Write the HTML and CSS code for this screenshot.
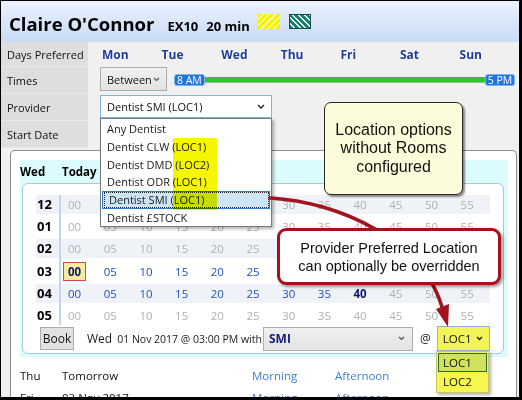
FILE: index.html
```html
<!DOCTYPE html>
<html>
<head>
<meta charset="utf-8">
<link rel="stylesheet" href="styles.css">
</head>
<body>
<div class="frame">
  <header class="hdr">
    <span class="name">Claire O'Connor</span>
    <span class="code">EX10</span>
    <span class="dur">20 min</span>
    <span class="sw sw-yellow"></span>
    <span class="sw sw-teal"></span>
  </header>

  <div class="form">
    <div class="lbl">Days Preferred</div>
    <div class="fld days"><span>Mon</span><span>Tue</span><span>Wed</span><span>Thu</span><span>Fri</span><span>Sat</span><span>Sun</span></div>
    <div class="lbl">Times</div>
    <div class="fld times">
      <div class="sel sel-between">Between<svg class="chev" width="7" height="5" viewBox="0 0 7 5"><path d="M1 1L3.5 3.5L6 1" fill="none" stroke="#555" stroke-width="1.2"/></svg></div>
      <div class="slider"><span class="pill">8 AM</span><span class="bar"></span><span class="pill">5 PM</span></div>
    </div>
    <div class="lbl">Provider</div>
    <div class="fld"><div class="sel sel-provider">Dentist SMI (LOC1)<svg class="chev" width="8" height="5" viewBox="0 0 8 5"><path d="M1 1L4 4L7 1" fill="none" stroke="#222" stroke-width="1.4"/></svg></div></div>
    <div class="lbl">Start Date</div>
    <div class="fld"></div>
  </div>

  <div class="main">
    <div class="panel">
      <div class="day">
        <div class="dayhead"><span class="dname">Wed</span><span>Today</span></div>
        <div class="slots">
          <div class="grid">
            <div class="hcol">
              <div class="h s">12</div>
              <div class="h">01</div>
              <div class="h s">02</div>
              <div class="h">03</div>
              <div class="h s">04</div>
              <div class="h">05</div>
            </div>
            <div class="mcol">
              <div class="mrow s"><span class="m">00</span><span class="m">05</span><span class="m">10</span><span class="m">15</span><span class="m">20</span><span class="m">25</span><span class="m">30</span><span class="m">35</span><span class="m">40</span><span class="m">45</span><span class="m">50</span><span class="m">55</span></div>
              <div class="mrow"><span class="m">00</span><span class="m">05</span><span class="m">10</span><span class="m">15</span><span class="m">20</span><span class="m">25</span><span class="m">30</span><span class="m">35</span><span class="m">40</span><span class="m">45</span><span class="m">50</span><span class="m">55</span></div>
              <div class="mrow s"><span class="m">00</span><span class="m">05</span><span class="m">10</span><span class="m">15</span><span class="m">20</span><span class="m">25</span><span class="m">30</span><span class="m">35</span><span class="m">40</span><span class="m">45</span><span class="m">50</span><span class="m">55</span></div>
              <div class="mrow"><span class="m"><span class="pick">00</span></span><span class="m a">05</span><span class="m a">10</span><span class="m a">15</span><span class="m a">20</span><span class="m a">25</span><span class="m a">30</span><span class="m a">35</span><span class="m a">40</span><span class="m a">45</span><span class="m a">50</span><span class="m a">55</span></div>
              <div class="mrow s"><span class="m a">00</span><span class="m a">05</span><span class="m a">10</span><span class="m a">15</span><span class="m a">20</span><span class="m a">25</span><span class="m a">30</span><span class="m a">35</span><span class="m b">40</span><span class="m">45</span><span class="m">50</span><span class="m">55</span></div>
              <div class="mrow"><span class="m">00</span><span class="m">05</span><span class="m">10</span><span class="m">15</span><span class="m">20</span><span class="m">25</span><span class="m">30</span><span class="m">35</span><span class="m">40</span><span class="m">45</span><span class="m">50</span><span class="m">55</span></div>
            </div>
          </div>
          <div class="bookbar">
            <div class="btn">Book</div>
            <div class="when"><span class="wday">Wed</span><span class="wrest">01 Nov 2017 @ 03:00 PM with</span></div>
            <div class="sel sel-smi">SMI<svg class="chev" width="7" height="5" viewBox="0 0 7 5"><path d="M1 1L3.5 3.5L6 1" fill="none" stroke="#555" stroke-width="1.2"/></svg></div>
            <span class="at">@</span>
            <div class="sel sel-loc">LOC1<svg class="chev" width="7" height="5" viewBox="0 0 7 5"><path d="M1 1L3.5 3.5L6 1" fill="none" stroke="#222" stroke-width="1.4"/></svg></div>
          </div>
        </div>
      </div>
      <div class="drows">
        <div class="drow"><span>Thu</span><span>Tomorrow</span><span class="per">Morning</span><span class="per">Afternoon</span></div>
        <div class="drow"><span>Fri</span><span>03 Nov 2017</span><span class="per">Morning</span><span class="per">Afternoon</span></div>
      </div>
    </div>
  </div>

  <div class="plist">
    <div class="pi">Any Dentist</div>
    <div class="pi">Dentist CLW (LOC1)</div>
    <div class="pi">Dentist DMD (LOC2)</div>
    <div class="pi">Dentist ODR (LOC1)</div>
    <div class="pi on"><span class="focus">Dentist SMI (LOC1)</span></div>
    <div class="pi">Dentist £STOCK</div>
  </div>
  <div class="hl"></div>

  <svg class="arrows" width="522" height="400" viewBox="0 0 522 400">
    <path d="M270 198 C340 202 422 240 442 307" fill="none" stroke="#a3121f" stroke-width="3.6" stroke-linecap="round"/>
    <polygon points="449,304 436,309 448,327" fill="#a3121f"/>
  </svg>

  <div class="callout c-yellow">Location options<br>without Rooms<br>configured</div>
  <div class="callout c-red">Provider Preferred Location<br>can optionally be overridden</div>

  <div class="llist">
    <div class="li on">LOC1</div>
    <div class="li">LOC2</div>
  </div>
</div>
</body>
</html>
```
FILE: styles.css
```css
* { box-sizing: border-box; }
html, body { margin: 0; padding: 0; }
body {
  width: 522px; height: 400px; overflow: hidden; background: #fff;
  font-family: "Open Sans", "Noto Sans", sans-serif; font-size: 11px; color: #1a1a1a;
}
.frame {
  position: relative; width: 522px; height: 400px; overflow: hidden;
  border: 1px solid #000; border-right-width: 3px; border-bottom-width: 3px;
  background: #f0f0f0;
}

/* header */
.hdr {
  height: 41px; display: flex; align-items: baseline; padding: 12px 0 0 8px;
  background: linear-gradient(#ebf2fd, #c9dbf5);
  color: #000;
}
.name { font-weight: 700; font-size: 18.5px; line-height: 22px; }
.code { font-weight: 700; font-size: 13px; margin-left: 13px; }
.dur { font-weight: 700; font-size: 13px; margin-left: 8px; }
.sw { width: 22px; height: 15px; align-self: flex-start; margin-top: 1px; }
.sw-yellow {
  margin-left: 8px;
  background: repeating-linear-gradient(135deg, #f4f400 0 3px, #fbfb9a 3px 4.5px);
}
.sw-teal {
  margin-left: 9px; border: 1px solid #0c4f47;
  background: repeating-linear-gradient(45deg, #17806f 0 2.5px, #e8f4f2 2.5px 4px);
}

/* form */
.form { display: grid; grid-template-columns: 87px 1fr; grid-template-rows: 25px 27px 27px 27px; }
.lbl {
  background: #dedede; padding-left: 6px; display: flex; align-items: center;
  border-bottom: 1px solid #e8e8e8; color: #111;
}
.fld { padding-left: 12px; }
.days {
  display: grid; grid-template-columns: repeat(7, 59.6px); align-items: center;
  padding-left: 14px; font-weight: 700; font-size: 12px; color: #1d3a9e;
  text-shadow: 0 0 2px #fff, 0 0 2px #fff;
}
.times { display: flex; align-items: flex-start; }
.sel {
  display: flex; align-items: center; justify-content: space-between;
  border: 1px solid #acacac; background: linear-gradient(#f0f0f0, #e3e3e3);
  padding: 0 6px 0 6px; color: #111;
}
.sel-between { width: 67px; height: 24px; }
.slider { flex: 1; display: flex; align-items: center; margin: 7px 4px 0 7px; height: 12px; }
.pill {
  background: #1f74e0; color: #fff; border: 1px solid #7fb2f2; border-radius: 3px;
  font-size: 10.5px; line-height: 10px; height: 12px; padding: 0 2px;
}
.bar {
  flex: 1; height: 6px; background: #2ec72e; border-top: 1px solid #7c8c7c;
  border-bottom: 1px solid #9ab89a;
}
.sel-provider {
  width: 172px; height: 23px; margin-top: 1px; background: #fff;
  border-color: #7eb4ea; padding-right: 6px;
}

/* main */
.main { padding: 2px 2px 0 9px; }
.panel {
  height: 260px; background: #fff; border: 1px solid #8c8c8c; border-bottom: 0;
  border-radius: 5px 5px 0 0; padding: 9px 8px 0 9px;
}
.day { background: #dcfbfc; padding: 0 4px 3px 0; }
.dayhead { height: 23px; display: flex; align-items: center; font-weight: 700; font-size: 11.5px; color: #000; }
.dname { width: 42px; }
.slots {
  margin-left: 2px; background: #fff; border: 1px solid #a6c6ea; border-radius: 6px;
  padding: 11px 0 2px 13px;
}
.grid { display: flex; }
.hcol { width: 25px; border-right: 2px solid #c3d5ee; display: flex; flex-direction: column; gap: 3.2px; }
.h { height: 19px; line-height: 19px; font-weight: 700; font-size: 13px; padding-left: 1px; color: #000; }
.s { background: #eff3f8; }
.mcol { display: flex; flex-direction: column; gap: 3.2px; }
.mrow { display: flex; height: 19px; line-height: 19px; width: 429px; }
.m { width: 35.7px; padding-left: 7px; font-size: 11.5px; color: #b0b0b0; flex: none; }
.m.a { color: #1d50c6; }
.m.b { color: #0f1a70; font-weight: 700; }
.pick {
  display: inline-block; margin-left: -5px; padding: 0 4px; line-height: 17px;
  border: 1px solid #d4445c; background: #f7ec9e; color: #101a6c; font-weight: 700;
}
.bookbar { display: flex; align-items: center; height: 24px; margin-top: 2px; padding-left: 4px; }
.btn {
  width: 34px; height: 23px; display: flex; align-items: center; justify-content: center;
  background: #e1e1e1; border: 1px solid #adadad; font-size: 12px; color: #111;
}
.when { width: 176px; margin-left: 13px; white-space: nowrap; }
.wday { font-size: 12px; }
.wrest { font-size: 10.5px; margin-left: 5px; }
.sel-smi { width: 150px; height: 24px; font-weight: 700; font-size: 12px; color: #14207a; padding: 0 7px 0 5px; }
.at { margin-left: 7px; font-size: 12px; }
.sel-loc {
  width: 53px; height: 25px; margin-left: 6px; background: #f3f35a; border-color: #8fb3df;
  font-size: 11.5px; padding: 0 6px 0 5px;
}
.drows { padding-top: 8px; }
.drow {
  display: grid; grid-template-columns: 42px 190px 83px auto; height: 22px; align-items: center;
  font-size: 11.5px; color: #111;
}
.per { color: #3f7ecb; }

/* overlays */
.plist {
  position: absolute; left: 99px; top: 117px; width: 172px; height: 109px;
  background: #fff; border: 1px solid #7a7a7a; box-shadow: 2px 2px 3px rgba(0,0,0,0.3);
  padding-top: 1px;
}
.pi { height: 17.8px; line-height: 17.8px; padding-left: 6px; color: #1a1a1a; }
.pi.on { background: #cde4f7; border: 1px solid #2b7cd3; margin: 0 1px; padding-left: 1px; line-height: 15.8px; }
.focus { display: block; border: 1px dotted #222; height: 15.8px; line-height: 13.8px; padding-left: 4px; }
.hl {
  position: absolute; left: 172px; top: 137px; width: 44px; height: 72px;
  background: #f6f600; mix-blend-mode: multiply;
}
.arrows { position: absolute; left: -1px; top: -1px; }
.callout {
  position: absolute; display: flex; align-items: center; justify-content: center; text-align: center;
  font-family: "Liberation Sans", Arial, sans-serif; color: #111;
}
.c-yellow {
  left: 323px; top: 101px; width: 139px; height: 93px; background: #fcfcdb;
  border: 1.5px solid #2a2a2a; border-radius: 7px; font-size: 16px; line-height: 18.5px;
  box-shadow: 2px 2px 2px rgba(0,0,0,0.45);
}
.c-red {
  left: 276px; top: 227px; width: 224px; height: 57px; background: #fff;
  border: 3px solid #a8101c; border-radius: 9px; font-size: 14.5px; line-height: 18px;
  box-shadow: 2px 2px 3px rgba(0,0,0,0.4);
}
.llist {
  position: absolute; left: 435px; top: 350px; width: 53px; height: 42px;
  background: #f6f64e; border: 1px solid #c8c86a; box-shadow: 2px 2px 3px rgba(0,0,0,0.3);
  padding: 1px;
}
.li { height: 19px; line-height: 19px; padding-left: 5px; font-size: 11.5px; color: #111; }
.li.on { background: #d3e25c; border: 1px solid #2f6a2a; line-height: 17px; padding-left: 4px; }
```
